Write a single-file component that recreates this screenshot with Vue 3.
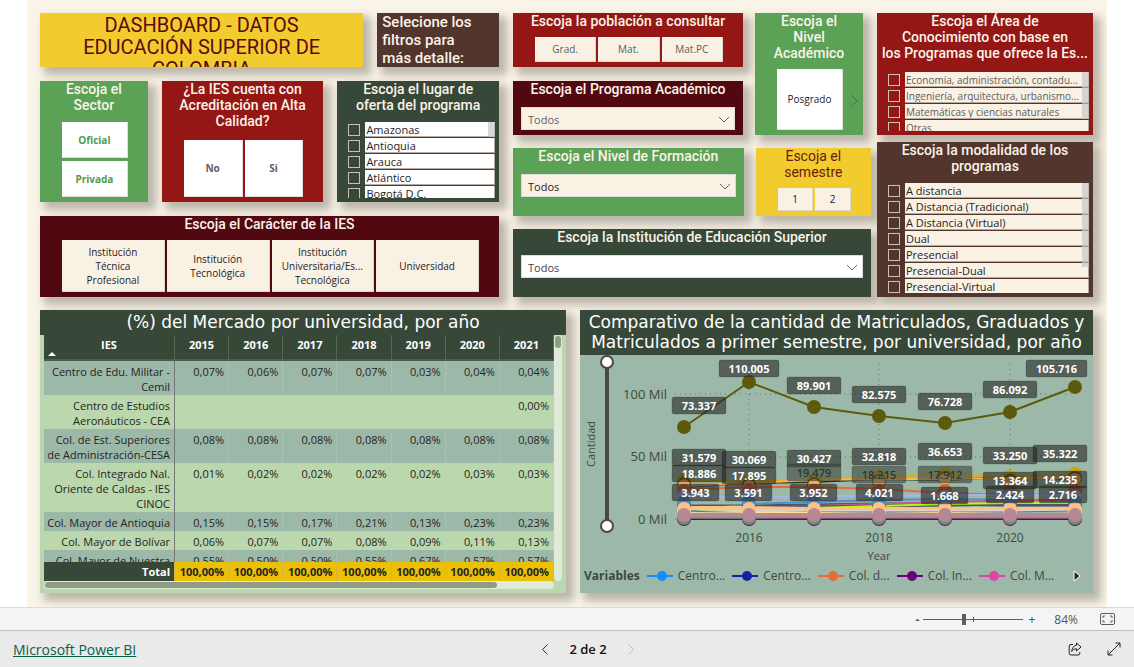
<script setup>
import { ref } from 'vue'

const places = ['Amazonas', 'Antioquia', 'Arauca', 'Atlántico', 'Bogotá D.C.']
const areas = [
  'Economía, administración, contadu...',
  'Ingeniería, arquitectura, urbanismo...',
  'Matemáticas y ciencias naturales',
  'Otras',
]
const modes = [
  'A distancia',
  'A Distancia (Tradicional)',
  'A Distancia (Virtual)',
  'Dual',
  'Presencial',
  'Presencial-Dual',
  'Presencial-Virtual',
]
const kinds = [
  ['Institución', 'Técnica', 'Profesional'],
  ['Institución', 'Tecnológica'],
  ['Institución', 'Universitaria/Es...', 'Tecnológica'],
  ['Universidad'],
]

const years = ['2015', '2016', '2017', '2018', '2019', '2020', '2021']
const rows = [
  ['Centro de Edu. Militar - Cemil', '0,07%', '0,06%', '0,07%', '0,07%', '0,03%', '0,04%', '0,04%'],
  ['Centro de Estudios Aeronáuticos - CEA', '', '', '', '', '', '', '0,00%'],
  ['Col. de Est. Superiores de Administración-CESA', '0,08%', '0,08%', '0,08%', '0,08%', '0,08%', '0,08%', '0,08%'],
  ['Col. Integrado Nal. Oriente de Caldas - IES CINOC', '0,01%', '0,02%', '0,02%', '0,02%', '0,02%', '0,03%', '0,03%'],
  ['Col. Mayor de Antioquia', '0,15%', '0,15%', '0,17%', '0,21%', '0,13%', '0,23%', '0,23%'],
  ['Col. Mayor de Bolívar', '0,06%', '0,07%', '0,07%', '0,08%', '0,09%', '0,11%', '0,13%'],
  ['Col. Mayor de Nuestra', '0,55%', '0,50%', '0,50%', '0,55%', '0,67%', '0,57%', '0,57%'],
]

const xs = [104, 169, 234, 299, 365, 430, 495]
const series = [
  { color: '#7a0050', w: 2, ys: [164, 164, 164, 164, 164, 164, 164] },
  { color: '#2fa84a', w: 1, ys: [163, 163, 162, 162, 161, 162, 162] },
  { color: '#8a8f8c', w: 5, ys: [161, 161, 161, 161, 161, 161, 161] },
  { color: '#1b3a2a', w: 2, ys: [132, 128, 127, 124, 125, 122, 124] },
  { color: '#e66c37', w: 2, ys: [135, 132, 132, 134, 138, 140, 139] },
  { color: '#d9b300', w: 2, ys: [125, 126, 125, 122, 119, 122, 119] },
  { color: '#ffb15c', w: 2, ys: [131, 128, 125, 124, 124, 123, 123] },
  { color: '#a6b4ef', w: 2, ys: [142, 142, 141, 141, 140, 140, 140] },
  { color: '#4d5566', w: 3, ys: [151, 151, 150, 149, 149, 150, 150] },
  { color: '#4a92d0', w: 2, ys: [156, 149, 147, 145, 144, 145, 145] },
  { color: '#d64f9f', w: 2, ys: [154, 153, 151, 149, 147, 146, 145] },
  { color: '#4d5566', w: 3, ys: [154, 152, 152, 151, 150, 149, 148] },
  { color: '#b4ff00', w: 2, ys: [157, 156, 153, 151, 149, 148, 148] },
  { color: '#ffc285', w: 4, ys: [153, 153, 154, 154, 154, 154, 154] },
  { color: '#d8d4d0', w: 2, ys: [157, 156, 156, 156, 156, 156, 156] },
  { color: '#5b6fae', w: 1, ys: [156, 158, 157, 157, 157, 157, 156] },
  { color: '#ffe38a', w: 2, ys: [159, 158, 158, 159, 158, 159, 160] },
  { color: '#b68794', w: 4, ys: [160, 160, 160, 160, 160, 160, 160] },
]
const stack = [
  { color: '#7a0050', dy: 164 },
  { color: '#6f8a80', dy: 163 },
  { color: '#4d5566', dy: 150 },
  { color: '#4a92d0', dy: 147 },
  { color: '#ffc285', dy: 154 },
  { color: '#ffe38a', dy: 158 },
  { color: '#ffc285', dy: 156 },
  { color: '#b68794', dy: 160 },
]
const mainYs = [72, 27, 52, 61, 68, 57, 32]
const golds = [125, 126, 125, 122, 119, 122, 119]

const labels = [
  [92, 42, 54, '73.337'], [139, 5, 60, '110.005'], [207, 22, 54, '89.901'], [272, 31, 54, '82.575'],
  [338, 38, 54, '76.728'], [403, 26, 54, '86.092'], [446, 5, 61, '105.716'],
  [92, 94, 54, '31.579'], [142, 96, 54, '30.069'], [207, 95, 54, '30.427'], [272, 93, 54, '32.818'],
  [338, 88, 54, '36.653'], [403, 92, 54, '33.250'], [453, 90, 54, '35.322'],
  [92, 110, 54, '18.886'], [142, 112, 54, '17.895'], [207, 109, 54, '19.479', true], [272, 111, 54, '18.215', true],
  [338, 111, 54, '17.912', true], [403, 117, 54, '13.364'], [453, 116, 54, '14.235'],
  [92, 129, 47, '3.943'], [145, 129, 47, '3.591'], [210, 129, 47, '3.952'], [276, 129, 47, '4.021'],
  [341, 132, 47, '1.668'], [406, 131, 48, '2.424'], [459, 131, 48, '2.716'],
]

const legend = [
  ['Centro...', '#118dff'],
  ['Centro...', '#12239e'],
  ['Col. d...', '#e66c37'],
  ['Col. In...', '#6b007b'],
  ['Col. M...', '#e044a7'],
]

const zoom = ref(40)
const points = (ys) => xs.map((x, i) => `${x},${ys[i]}`).join(' ')
</script>

<template>
  <div class="shell">
    <main class="report">
      <section class="filters">
        <div class="col-left">
          <div class="row-title">
            <div class="card yellow"><h1>DASHBOARD - DATOS EDUCACIÓN SUPERIOR DE COLOMBIA</h1></div>
            <div class="card brown"><p class="hint">Selecione los filtros para más detalle:</p></div>
          </div>
          <div class="row-three">
            <div class="card green">
              <h2 class="narrow">Escoja el Sector</h2>
              <div class="tiles column bold-green">
                <button>Oficial</button>
                <button>Privada</button>
              </div>
            </div>
            <div class="card red">
              <h2 class="inset">¿La IES cuenta con Acreditación en Alta Calidad?</h2>
              <div class="tiles bold-gray">
                <button>No</button>
                <button>Si</button>
              </div>
            </div>
            <div class="card forest">
              <h2 class="inset">Escoja el lugar de oferta del programa</h2>
              <div class="list white">
                <label v-for="p in places" :key="p"><input type="checkbox" /><span>{{ p }}</span></label>
                <i class="thumb short"></i>
              </div>
            </div>
          </div>
          <div class="card wine">
            <h2>Escoja el Carácter de la IES</h2>
            <div class="tiles cream dark">
              <button v-for="(k, i) in kinds" :key="i"><span v-for="l in k" :key="l">{{ l }}</span></button>
            </div>
          </div>
        </div>

        <div class="col-mid">
          <div class="mid-top">
            <div class="mid-stack">
              <div class="card red">
                <h2>Escoja la población a consultar</h2>
                <div class="tiles cream">
                  <button>Grad.</button>
                  <button>Mat.</button>
                  <button>Mat.PC</button>
                </div>
              </div>
              <div class="card wine">
                <h2><label for="programa">Escoja el Programa Académico</label></h2>
                <div class="drop cream dim">
                  <select id="programa"><option>Todos</option></select>
                  <svg viewBox="0 0 12 7"><path d="M1 1l5 5 5-5" /></svg>
                </div>
              </div>
            </div>
            <div class="card green">
              <h2 class="narrow">Escoja el Nivel Académico</h2>
              <div class="tiles black">
                <button>Posgrado</button>
              </div>
              <button class="next" aria-label="Siguiente">
                <svg viewBox="0 0 8 14"><path d="M1 1l6 6-6 6" /></svg>
              </button>
            </div>
          </div>
          <div class="mid-row">
            <div class="card green">
              <h2><label for="formacion">Escoja el Nivel de Formación</label></h2>
              <div class="drop cream">
                <select id="formacion"><option>Todos</option></select>
                <svg viewBox="0 0 12 7"><path d="M1 1l5 5 5-5" /></svg>
              </div>
            </div>
            <div class="card yellow">
              <h2 class="thin">Escoja el semestre</h2>
              <div class="tiles cream black">
                <button>1</button>
                <button>2</button>
              </div>
            </div>
          </div>
          <div class="card forest">
            <h2><label for="institucion">Escoja la Institución de Educación Superior</label></h2>
            <div class="drop">
              <select id="institucion"><option>Todos</option></select>
              <svg viewBox="0 0 12 7"><path d="M1 1l5 5 5-5" /></svg>
            </div>
          </div>
        </div>

        <div class="col-right">
          <div class="card red">
            <h2>Escoja el Área de<br />Conocimiento con base en<br />los Programas que ofrece la Es...</h2>
            <div class="list faint">
              <label v-for="a in areas" :key="a"><input type="checkbox" /><span>{{ a }}</span></label>
              <i class="thumb mid"></i>
            </div>
          </div>
          <div class="card brown">
            <h2 class="inset">Escoja la modalidad de los programas</h2>
            <div class="list">
              <label v-for="m in modes" :key="m"><input type="checkbox" /><span>{{ m }}</span></label>
              <i class="thumb long"></i>
            </div>
          </div>
        </div>
      </section>

      <section class="visuals">
        <div class="card market">
          <h3>(%) del Mercado por universidad, por año</h3>
          <div class="grid-area">
            <div class="scroller">
              <table>
                <colgroup><col class="first" /><col v-for="y in years" :key="y" /></colgroup>
                <thead>
                  <tr>
                    <th>IES<svg class="sort" viewBox="0 0 8 4"><path d="M0 4l4-4 4 4z" /></svg></th>
                    <th v-for="y in years" :key="y">{{ y }}</th>
                  </tr>
                </thead>
                <tbody>
                  <tr v-for="r in rows" :key="r[0]"><td v-for="(c, i) in r" :key="i">{{ c }}</td></tr>
                </tbody>
                <tfoot>
                  <tr><td>Total</td><td v-for="y in years" :key="y">100,00%</td></tr>
                </tfoot>
              </table>
            </div>
            <div class="vbar"><i></i></div>
            <div class="hbar"><i></i></div>
          </div>
        </div>

        <div class="card chart">
          <h3>Comparativo de la cantidad de Matriculados, Graduados y Matriculados a primer semestre, por universidad, por año</h3>
          <svg class="plot" viewBox="0 0 513 209">
            <g class="guides">
              <path d="M95 39H495M95 102H495M95 164H495" />
              <path d="M169 9V166M299 9V166M430 9V166" />
            </g>
            <g class="range">
              <path d="M27 7V171" />
              <circle cx="27" cy="7" r="6" />
              <circle cx="27" cy="171" r="6" />
            </g>
            <g class="axis">
              <text class="big" x="87" y="44" text-anchor="end">100 Mil</text>
              <text class="big" x="87" y="106" text-anchor="end">50 Mil</text>
              <text class="big" x="87" y="169" text-anchor="end">0 Mil</text>
              <text x="169" y="187" text-anchor="middle">2016</text>
              <text x="299" y="187" text-anchor="middle">2018</text>
              <text x="430" y="187" text-anchor="middle">2020</text>
              <text class="name" x="299" y="205" text-anchor="middle">Year</text>
              <text class="name" transform="translate(15 89) rotate(-90)" text-anchor="middle">Cantidad</text>
            </g>
            <polyline v-for="(s, i) in series" :key="i" :points="points(s.ys)" fill="none" :stroke="s.color" :stroke-width="s.w" />
            <g v-for="(x, i) in xs" :key="x">
              <circle :cx="x" :cy="golds[i]" r="7" fill="#c9a800" />
              <circle :cx="x" :cy="golds[i] + 4" r="7" fill="#5a4a1c" />
              <circle :cx="x" :cy="golds[i] + 5" r="6" fill="#ffb15c" />
              <circle :cx="x" cy="136" r="7" fill="#d4622f" />
              <circle :cx="x" cy="142" r="7" fill="#a6b4ef" />
              <circle v-for="(c, j) in stack" :key="j" :cx="x" :cy="c.dy" r="7" :fill="c.color" />
            </g>
            <polyline :points="points(mainYs)" fill="none" stroke="#5d5a0c" stroke-width="2" />
            <circle v-for="(x, i) in xs" :key="'m' + x" :cx="x" :cy="mainYs[i]" r="7" fill="#5d5a0c" />
            <g v-for="l in labels" :key="l[3]" class="tag" :class="{ faded: l[4] }">
              <rect :x="l[0]" :y="l[1]" :width="l[2]" height="17" rx="2" />
              <text :x="l[0] + l[2] / 2" :y="l[1] + 13" text-anchor="middle">{{ l[3] }}</text>
            </g>
          </svg>
          <div class="legend">
            <b>Variables</b>
            <span v-for="(l, i) in legend" :key="i">
              <svg viewBox="0 0 26 10"><path d="M0 5H26" :stroke="l[1]" stroke-width="2" /><circle cx="15" cy="5" r="5" :fill="l[1]" /></svg>{{ l[0] }}
            </span>
            <button aria-label="Más"><svg viewBox="0 0 8 12"><path d="M1 1l6 5-6 5z" fill="#252423" stroke="#fff" /></svg></button>
          </div>
        </div>
      </section>
    </main>

    <div class="status">
      <button aria-label="Reducir"><b>-</b></button>
      <input v-model="zoom" type="range" min="0" max="100" aria-label="Zoom" />
      <button aria-label="Ampliar">+</button>
      <span class="percent">84%</span>
      <button class="fit" aria-label="Ajustar a la página">
        <svg viewBox="0 0 15 12">
          <rect x=".5" y=".5" width="14" height="11" rx="1.5" />
          <path d="M3 5V3h2M10 3h2v2M12 7v2h-2M5 9H3V7" />
        </svg>
      </button>
    </div>

    <footer class="bottom">
      <a href="#">Microsoft Power BI</a>
      <nav>
        <button aria-label="Página anterior"><svg viewBox="0 0 6 11"><path d="M5.500.5l-5 5 5 5" stroke="#333" /></svg></button>
        <span>2 de 2</span>
        <button aria-label="Página siguiente"><svg viewBox="0 0 6 11"><path d="M.5.500l5 5-5 5" stroke="#c0c0c0" /></svg></button>
      </nav>
      <div class="tools">
        <button aria-label="Compartir">
          <svg viewBox="0 0 14 14">
            <path d="M5 2.500H3A1.800 1.800 0 0 0 1.200 4.300v6.900A1.800 1.800 0 0 0 3 13h7a1.800 1.800 0 0 0 1.800-1.800V10" />
            <path d="M8.500 1l4.500 4-4.500 4V6.800C6.300 6.800 4.800 7.600 3.700 9.500 4 6.200 5.500 3.700 8.500 3.300z" />
          </svg>
        </button>
        <button aria-label="Pantalla completa">
          <svg viewBox="0 0 14 14"><path d="M1 13L13 1M8.500 1H13v4.500M5.500 13H1V8.500" /></svg>
        </button>
      </div>
    </footer>
  </div>
</template>

<style>
body {
  margin: 0;
  background: #fff;
}
</style>

<style scoped>
* {
  box-sizing: border-box;
}
.shell {
  display: flex;
  flex-direction: column;
  min-height: 100vh;
  font-family: "Open Sans", "Noto Sans", sans-serif;
  font-size: 11px;
  color: #252423;
}
button {
  padding: 0;
  border: 0;
  background: none;
  font: inherit;
  color: inherit;
}
h1, h2, h3, p {
  margin: 0;
}
svg {
  display: block;
  fill: none;
}
.report {
  display: flex;
  flex-direction: column;
  gap: 13px;
  margin: 0 27px;
  padding: 13px 14px 14px 13px;
  background: #faf3e7;
  overflow: hidden;
}
.filters {
  display: grid;
  grid-template-columns: minmax(0, 459fr) minmax(0, 358fr) minmax(0, 208fr);
  column-gap: 14px;
}
.col-left, .col-mid, .col-right {
  display: grid;
  gap: 14px;
}
.col-left {
  grid-template-rows: 54px 121px 81px;
}
.col-mid {
  grid-template-rows: 122px 68px 68px;
  gap: 13px;
}
.col-right {
  grid-template-rows: 122px 155px;
  gap: 7px;
  margin-left: -8px;
}
.row-title {
  display: grid;
  grid-template-columns: 324fr 122fr;
  gap: 14px;
}
.row-three {
  display: grid;
  grid-template-columns: 108fr 162fr 162fr;
  gap: 14px;
}
.mid-top {
  display: grid;
  grid-template-columns: 230fr 108fr;
  gap: 12px;
  margin-right: 8px;
}
.mid-stack {
  display: grid;
  grid-template-rows: 1fr 1fr;
  gap: 14px;
}
.mid-row {
  display: grid;
  grid-template-columns: 230fr 115fr;
  gap: 12px;
}
.card {
  position: relative;
  display: flex;
  flex-direction: column;
  min-width: 0;
  min-height: 0;
  box-shadow: 6px 6px 8px 2px rgba(60, 55, 45, 0.32);
}
.yellow { background: #f2cc2f; color: #5a0a10; }
.brown { background: #52352d; }
.green { background: #5ca256; }
.red { background: #941615; }
.forest { background: #374839; }
.wine { background: #520811; }
h1 {
  padding: 1px 30px 0;
  overflow: hidden;
  font: 400 20px/22px Roboto, sans-serif;
  text-align: center;
}
.hint {
  padding: 0 16px 0 5px;
  color: #faf3e7;
  font: 500 15px/18px Roboto, sans-serif;
}
h2 {
  padding: 0 4px;
  color: #faf3e7;
  font: 500 14px/16px Roboto, sans-serif;
  text-align: center;
}
h2.inset { padding: 0 16px; }
h2.narrow { padding: 0 18px; }
h2.thin {
  padding: 0 20px;
  color: #6b1a10;
  font-weight: 400;
}
.tiles {
  display: flex;
  flex: 1;
  gap: 2px;
  margin: 8px 20px 5px 22px;
}
.tiles.column {
  flex-direction: column;
  gap: 3px;
  margin-top: 9px;
}
.tiles.bold-gray { margin-top: 11px; }
.tiles button {
  display: flex;
  flex: 1;
  flex-direction: column;
  align-items: center;
  justify-content: center;
  min-width: 0;
  background: #fff;
  border: 1px solid rgba(200, 190, 180, 0.5);
  border-width: 0 1px 1px 0;
  color: #605e5c;
  font-size: 10px;
  line-height: 14px;
}
.tiles.cream button { background: #f9f1e4; }
.tiles.bold-green button { color: #4f9a4a; font-weight: 700; }
.tiles.bold-gray button { font-weight: 700; }
.tiles.dark button, .tiles.black button { color: #252423; }
.next {
  position: absolute;
  right: 5px;
  top: 81px;
  width: 8px;
  height: 14px;
}
.next svg { stroke: #4e6b4a; }
.drop {
  position: relative;
  margin: 10px 8px 0;
}
.drop select {
  display: block;
  width: 100%;
  height: 23px;
  padding: 2px 6px 0;
  border: 1px solid #dcdcdc;
  border-radius: 0;
  background: #fff;
  appearance: none;
  color: #444;
  font: inherit;
}
.drop.cream select { background: #f9f1e4; color: #252423; }
.drop.dim select { color: #605e5c; }
.drop svg {
  position: absolute;
  right: 5px;
  top: 9px;
  width: 12px;
  height: 7px;
  stroke: #666;
  pointer-events: none;
}
.list {
  position: relative;
  flex: 1;
  min-height: 0;
  margin: 9px 4px 4px 11px;
  overflow: hidden;
}
.list.faint { margin-top: 11px; }
.list label {
  display: grid;
  grid-template-columns: 12px minmax(0, 1fr);
  gap: 5px;
  height: 16px;
}
.list input {
  width: 12px;
  height: 12px;
  margin: 2px 0 0;
  border: 1px solid #c8c0b4;
  background: none;
  appearance: none;
}
.list span {
  height: 15px;
  padding-left: 1px;
  overflow: hidden;
  border: 1px solid #b4a8a0;
  border-width: 0 1px 1px 0;
  background: #f9f1e4;
  line-height: 16px;
  white-space: nowrap;
}
.list.white span { background: #fff; }
.list.faint span { color: #605e5c; font-size: 10px; }
.thumb {
  position: absolute;
  top: 0;
  right: 0;
  width: 7px;
  background: rgba(200, 200, 200, 0.7);
}
.thumb.short { height: 15px; }
.thumb.mid { height: 47px; }
.thumb.long { height: 84px; }

.visuals {
  display: grid;
  grid-template-columns: minmax(0, 526fr) minmax(0, 513fr);
  gap: 14px;
}
h3 {
  background: #374839;
  color: #fff;
  font: 400 17px/20px "DejaVu Sans", sans-serif;
  text-align: center;
}
.market { background: #bbd7ad; }
.market h3 { padding: 2px 0 3px; }
.grid-area {
  display: grid;
  grid-template-columns: minmax(0, 1fr) 8px;
  grid-template-rows: 246px 8px;
  margin: 0 4px 4px;
}
.scroller { overflow: hidden; }
table {
  width: 100%;
  table-layout: fixed;
  border-collapse: separate;
  border-spacing: 0;
  line-height: 15px;
}
col.first { width: 131px; }
th {
  position: relative;
  height: 26px;
  padding: 0 0 5px;
  border-right: 1px solid #56694f;
  border-bottom: 2px solid #4a5f49;
  background: #374839;
  color: #fff;
  font-weight: 700;
}
.sort {
  position: absolute;
  left: 4px;
  bottom: 3px;
  width: 8px;
  height: 4px;
  fill: #fff;
}
td {
  padding: 3px 4px 1px 2px;
  border-right: 1px solid #a7c3b0;
  text-align: right;
  vertical-align: top;
}
tbody tr:nth-child(odd) td { background: #9cb8a8; }
tbody tr:nth-child(even) td { background: #bbd7ad; border-right-color: #bbd7ad; }
tbody tr td:first-child, tbody tr:nth-child(even) td:first-child { border-right-color: #777; }
tfoot td {
  position: sticky;
  bottom: 0;
  padding: 2px 4px 2px 2px;
  border-right-color: #d9b43a;
  background: #ebc005;
  font-weight: 700;
}
tfoot td:first-child { background: #374839; color: #fff; }
.vbar, .hbar {
  border-radius: 4px;
  background: #dfebd8;
}
.vbar i, .hbar i {
  display: block;
  border-radius: 4px;
  background: #8f9b85;
}
.vbar { padding: 1px; }
.vbar i { height: 12px; }
.hbar { padding: 1px; }
.hbar i { width: 89%; height: 6px; }

.chart { background: #9cb8a8; }
.chart h3 { padding: 2px 4px 3px; }
.plot { width: 100%; }
.guides {
  stroke: #5c6f64;
  stroke-dasharray: 1 4;
}
.range {
  fill: #fff;
  stroke: #4a4846;
  stroke-width: 2;
}
.range path { stroke-width: 4; }
.axis {
  fill: #3d4a42;
  font-size: 12px;
}
.axis .big { font-size: 13px; }
.axis .name { font-size: 11px; }
.tag rect {
  fill: rgba(37, 36, 35, 0.6);
  stroke: rgba(37, 36, 35, 0.2);
}
.tag text {
  fill: #fff;
  font-size: 11px;
  font-weight: 700;
}
.tag.faded rect { fill: rgba(60, 66, 58, 0.6); }
.tag.faded text { fill: #2c382c; font-weight: 600; }
.legend {
  display: flex;
  align-items: center;
  gap: 7px;
  padding: 4px 12px 4px 4px;
  color: #3d4a42;
  font-size: 12px;
  line-height: 16px;
}
.legend span {
  display: flex;
  align-items: center;
  gap: 5px;
  white-space: nowrap;
}
.legend span svg { width: 26px; height: 10px; }
.legend button { margin-left: auto; }
.legend button svg { width: 8px; height: 12px; }

.status {
  display: flex;
  align-items: center;
  justify-content: flex-end;
  height: 23px;
  padding-right: 19px;
  border-top: 1px solid #dadada;
  background: #f4f4f4;
  color: #555;
  font-size: 12px;
}
.status input {
  width: 100px;
  height: 14px;
  margin: 0 5px 0 4px;
  background:
    linear-gradient(#605e5c, #605e5c) 50px 5px / 1px 5px no-repeat,
    linear-gradient(#605e5c, #605e5c) 0 7px / 100% 1px no-repeat;
  appearance: none;
}
.status input::-webkit-slider-thumb {
  width: 4px;
  height: 11px;
  background: #605e5c;
  appearance: none;
}
.percent { margin: 0 22px 0 19px; }
.fit svg {
  width: 15px;
  height: 12px;
  stroke: #605e5c;
}
.bottom {
  display: grid;
  flex: 1;
  grid-template-columns: 1fr auto 1fr;
  align-items: center;
  min-height: 37px;
  padding: 0 13px;
  border-top: 1px solid #c0c0c0;
  background: #eaeaea;
  color: #111;
  font-size: 13px;
}
.bottom a {
  justify-self: start;
  color: #04614c;
  font-size: 14px;
}
.bottom nav {
  display: flex;
  align-items: center;
  gap: 21px;
  margin-left: 42px;
  font-weight: 600;
}
.bottom nav svg { width: 6px; height: 11px; }
.tools {
  display: flex;
  justify-content: flex-end;
  gap: 25px;
}
.tools svg {
  width: 14px;
  height: 14px;
  stroke: #222;
}
</style>
